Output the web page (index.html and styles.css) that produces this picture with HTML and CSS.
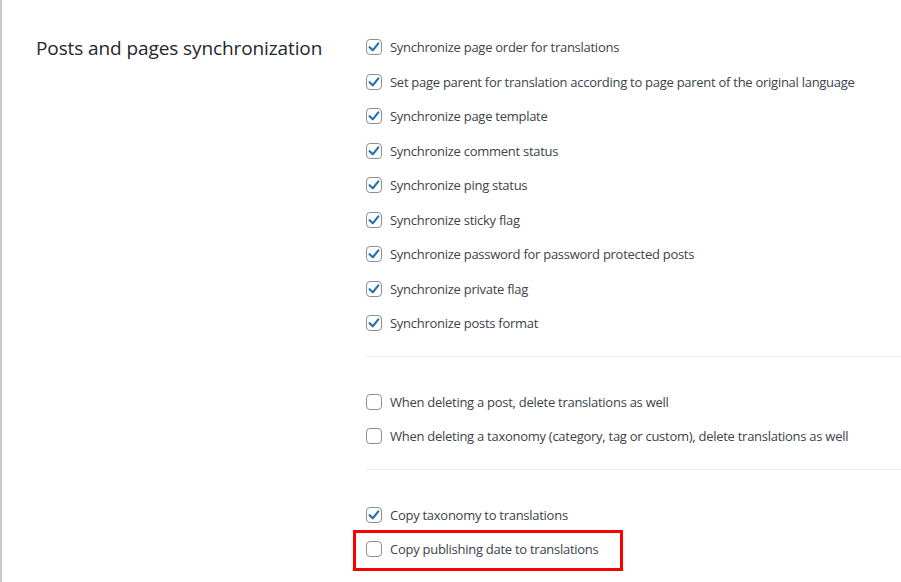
FILE: index.html
```html
<!DOCTYPE html>
<html>
<head>
<meta charset="utf-8">
<link rel="stylesheet" href="styles.css">
</head>
<body>
<div class="page">
  <div class="label">Posts and pages synchronization</div>
  <div class="options">
    <div class="group">
      <div class="row"><span class="cb checked"><svg viewBox="0 0 16 16"><path d="M3 8.2 L6.6 11.8 L13 3.8"/></svg></span><span class="txt">Synchronize page order for translations</span></div>
      <div class="row"><span class="cb checked"><svg viewBox="0 0 16 16"><path d="M3 8.2 L6.6 11.8 L13 3.8"/></svg></span><span class="txt">Set page parent for translation according to page parent of the original language</span></div>
      <div class="row"><span class="cb checked"><svg viewBox="0 0 16 16"><path d="M3 8.2 L6.6 11.8 L13 3.8"/></svg></span><span class="txt">Synchronize page template</span></div>
      <div class="row"><span class="cb checked"><svg viewBox="0 0 16 16"><path d="M3 8.2 L6.6 11.8 L13 3.8"/></svg></span><span class="txt">Synchronize comment status</span></div>
      <div class="row"><span class="cb checked"><svg viewBox="0 0 16 16"><path d="M3 8.2 L6.6 11.8 L13 3.8"/></svg></span><span class="txt">Synchronize ping status</span></div>
      <div class="row"><span class="cb checked"><svg viewBox="0 0 16 16"><path d="M3 8.2 L6.6 11.8 L13 3.8"/></svg></span><span class="txt">Synchronize sticky flag</span></div>
      <div class="row"><span class="cb checked"><svg viewBox="0 0 16 16"><path d="M3 8.2 L6.6 11.8 L13 3.8"/></svg></span><span class="txt">Synchronize password for password protected posts</span></div>
      <div class="row"><span class="cb checked"><svg viewBox="0 0 16 16"><path d="M3 8.2 L6.6 11.8 L13 3.8"/></svg></span><span class="txt">Synchronize private flag</span></div>
      <div class="row"><span class="cb checked"><svg viewBox="0 0 16 16"><path d="M3 8.2 L6.6 11.8 L13 3.8"/></svg></span><span class="txt">Synchronize posts format</span></div>
    </div>
    <hr class="sep">
    <div class="group">
      <div class="row"><span class="cb"></span><span class="txt">When deleting a post, delete translations as well</span></div>
      <div class="row"><span class="cb"></span><span class="txt">When deleting a taxonomy (category, tag or custom), delete translations as well</span></div>
    </div>
    <hr class="sep">
    <div class="group">
      <div class="row"><span class="cb checked"><svg viewBox="0 0 16 16"><path d="M3 8.2 L6.6 11.8 L13 3.8"/></svg></span><span class="txt">Copy taxonomy to translations</span></div>
      <div class="row highlighted"><span class="cb"></span><span class="txt">Copy publishing date to translations</span><span class="redbox"></span></div>
    </div>
  </div>
</div>
</body>
</html>
```

FILE: styles.css
```css
html, body {
  margin: 0;
  padding: 0;
  background: #ffffff;
}
body {
  font-family: "Open Sans", "Noto Sans", sans-serif;
  color: #3c434a;
}
.page {
  display: flex;
  border-left: 2px solid #c8c8c8;
  min-height: 582px;
  box-sizing: border-box;
}
.label {
  box-sizing: border-box;
  width: 364px;
  padding: 35px 0 0 34px;
  font-size: 19px;
  line-height: 26px;
  letter-spacing: -0.1px;
  color: #23282d;
}
.options {
  flex: 1;
  padding-top: 30px;
}
.row {
  position: relative;
  display: flex;
  align-items: center;
  gap: 8px;
  height: 34.5px;
  font-size: 13px;
  letter-spacing: -0.27px;
}
.cb {
  box-sizing: border-box;
  width: 16px;
  height: 16px;
  border: 1px solid #8c8f94;
  border-radius: 4px;
  background: #fff;
  flex: none;
  display: flex;
}
.cb svg {
  width: 14px;
  height: 14px;
  fill: none;
  stroke: #2271b1;
  stroke-width: 2.5;
  stroke-linecap: round;
  stroke-linejoin: round;
}
.txt {
  white-space: nowrap;
}
.sep {
  margin: 15px 0 28px 0;
  border: 0;
  border-top: 1px solid #eeeeee;
  height: 0;
}
.redbox {
  position: absolute;
  left: -13px;
  top: -2px;
  width: 270px;
  height: 41px;
  box-sizing: border-box;
  border: 3px solid #ff0000;
}
```
